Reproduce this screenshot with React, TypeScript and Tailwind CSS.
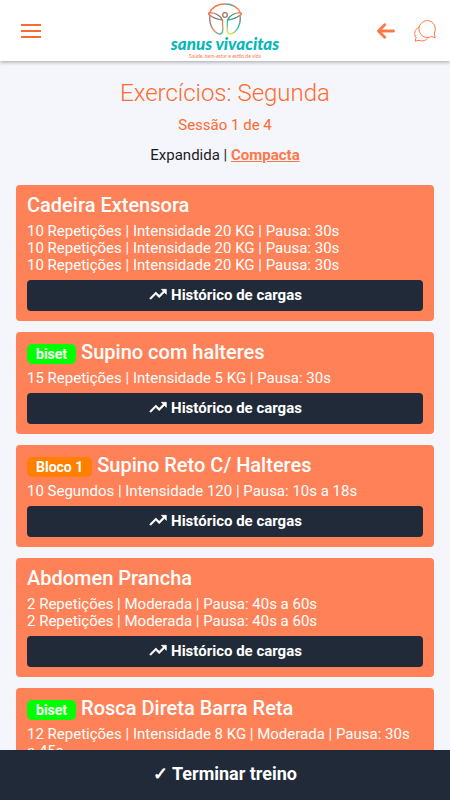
import { FaArrowLeft } from "react-icons/fa6";

type Exercise = {
  name: string;
  tag?: { label: string; className: string };
  sets: string[];
};

const BISET = { label: "biset", className: "bg-[#00ff00]" };

const exercises: Exercise[] = [
  {
    name: "Cadeira Extensora",
    sets: [
      "10 Repetições | Intensidade 20 KG | Pausa: 30s",
      "10 Repetições | Intensidade 20 KG | Pausa: 30s",
      "10 Repetições | Intensidade 20 KG | Pausa: 30s",
    ],
  },
  {
    name: "Supino com halteres",
    tag: BISET,
    sets: ["15 Repetições | Intensidade 5 KG | Pausa: 30s"],
  },
  {
    name: "Supino Reto C/ Halteres",
    tag: { label: "Bloco 1", className: "bg-[#ff8000]" },
    sets: ["10 Segundos | Intensidade 120 | Pausa: 10s a 18s"],
  },
  {
    name: "Abdomen Prancha",
    sets: [
      "2 Repetições | Moderada | Pausa: 40s a 60s",
      "2 Repetições | Moderada | Pausa: 40s a 60s",
    ],
  },
  {
    name: "Rosca Direta Barra Reta",
    tag: BISET,
    sets: ["12 Repetições | Intensidade 8 KG | Moderada | Pausa: 30s a\u00a045s"],
  },
];

function Logo() {
  return (
    <a href="#" className="flex flex-col items-center font-[Lato,sans-serif]">
      <svg viewBox="0 0 36 32" className="h-8 w-9" fill="none" strokeWidth="1.3" strokeLinecap="round">
        <defs>
          <linearGradient id="ring" x1="0" y1="0" x2="1" y2="0">
            <stop offset="0" stopColor="#ff6a3d" />
            <stop offset="0.4" stopColor="#ff7a45" />
            <stop offset="0.65" stopColor="#4aa89b" />
            <stop offset="0.85" stopColor="#f58a4b" />
            <stop offset="1" stopColor="#ff7a45" />
          </linearGradient>
          <linearGradient id="wingLeft" gradientUnits="userSpaceOnUse" x1="2" y1="10" x2="16" y2="31">
            <stop offset="0" stopColor="#ff6a3d" />
            <stop offset="0.35" stopColor="#6f7f78" />
            <stop offset="0.7" stopColor="#ff8a50" />
            <stop offset="1" stopColor="#12b5b0" />
          </linearGradient>
          <linearGradient id="wingRight" gradientUnits="userSpaceOnUse" x1="34" y1="10" x2="22" y2="31">
            <stop offset="0" stopColor="#ff7a45" />
            <stop offset="0.3" stopColor="#3f8f85" />
            <stop offset="0.6" stopColor="#2cc6a4" />
            <stop offset="1" stopColor="#e8e337" />
          </linearGradient>
        </defs>
        <path d="M2.500 10C5 4.500 11 1 18 1s13 3.500 15.500 9" stroke="url(#ring)" />
        <path
          d="M3 12.200C1 12 1 9.600 3 9.600c5 .2 10 2.400 12.500 7.400C11 16.500 6.500 15 3 12.200C1.500 21 6 29 12 31c2.500.5 3.800-1.500 3.800-4.500l-.3-9.500"
          stroke="url(#wingLeft)"
        />
        <path
          d="M33 12.200c2-.2 2-2.600 0-2.600-5 .2-10 2.400-12.500 7.400 4.500-.5 9-2 12.500-4.800C34.500 21 30 29 24 31c-2.500.5-3.800-1.500-3.800-4.500l.3-9.500"
          stroke="url(#wingRight)"
        />
        <circle cx="18" cy="12" r="2.300" stroke="#a87360" />
      </svg>
      <span className="text-[17px] leading-[18px] font-black italic text-[#05b8b8]">sanus vivacitas</span>
      <span className="text-[5px] leading-[6px] text-[#ff7a52]">Saúde, bem-estar e estilo de vida</span>
    </a>
  );
}

function ChatIcon() {
  return (
    <svg viewBox="0 0 24 24" className="size-6" fill="none" stroke="#ff7747" strokeWidth="1" strokeLinejoin="round">
      <path d="M14.500 1.500a8.500 8.500 0 1 0 4 16l3.700 1.200-.9-4.700a8.500 8.500 0 0 0-6.800-12.500Z" />
      <path d="M6 8C1.500 10.500.5 15 3 18.500l-.8 3.700 3.800-.9c3.500 1.400 7.200.4 9.500-3.300" />
    </svg>
  );
}

function TrendIcon() {
  return (
    <svg viewBox="0 0 24 24" className="size-5" fill="currentColor" stroke="currentColor" strokeWidth="0.8">
      <path d="m16 4 2.300 2.300-4.900 4.900-4-4L2 14.600 3.400 16l6-6 4 4 6.300-6.300L22 10V4z" />
    </svg>
  );
}

function Header() {
  return (
    <header className="relative z-10 flex items-start justify-between bg-white px-[21px] shadow-[0_1px_4px_rgba(0,0,0,0.35)]">
      <div className="flex h-[61px] flex-1 items-center">
        <button type="button" aria-label="Menu" className="flex w-5 flex-col gap-1">
          <span className="h-0.5 w-full bg-[#ff6a2f]" />
          <span className="h-0.5 w-full bg-[#ff6a2f]" />
          <span className="h-0.5 w-full bg-[#ff6a2f]" />
        </button>
      </div>
      <div className="pt-[3px]">
        <Logo />
      </div>
      <div className="flex h-[61px] flex-1 items-center justify-end gap-[17px]">
        <button type="button" aria-label="Voltar">
          <FaArrowLeft className="size-5 text-[#ff7747]" stroke="currentColor" strokeWidth="10" />
        </button>
        <button type="button" aria-label="Mensagens" className="-mr-2">
          <ChatIcon />
        </button>
      </div>
    </header>
  );
}

function ExerciseCard({ exercise }: { exercise: Exercise }) {
  return (
    <article className="rounded bg-[#ff8157] px-[11px] pt-2 pb-2.5 text-white">
      <h2 className="mb-1.5 flex items-center text-[20px] leading-6 font-medium">
        {exercise.tag && (
          <span
            className={`mt-1 mr-[5px] rounded-[5px] px-[9px] text-[14px] leading-5 font-bold ${exercise.tag.className}`}
          >
            {exercise.tag.label}
          </span>
        )}
        {exercise.name}
      </h2>
      {exercise.sets.map((set, i) => (
        <p key={i} className="text-[15px] leading-[17px]">
          {set}
        </p>
      ))}
      <button
        type="button"
        className="mt-1.5 flex h-[31px] w-full items-center justify-center gap-[3px] rounded bg-[#212a38] text-[15px] font-bold"
      >
        <TrendIcon />
        Histórico de cargas
      </button>
    </article>
  );
}

export default function App() {
  return (
    <div className="flex h-screen flex-col bg-[#f4f6fb] font-[Roboto,sans-serif] text-[#1b1b1f]">
      <Header />

      <main className="min-h-0 flex-1 overflow-y-auto px-4 pb-4 [scrollbar-width:none]">
        <div className="flex flex-col items-center pt-4 text-[15px]">
          <h1 className="text-[24px] leading-8 font-light text-[#ff6a2f]">Exercícios: Segunda</h1>
          <p className="mt-1.5 leading-5 text-[#ff6a2f]">Sessão 1 de 4</p>
          <p className="mt-2.5 leading-5">
            Expandida |{" "}
            <a href="#" className="font-bold text-[#ff7747] underline">
              Compacta
            </a>
          </p>
        </div>

        {/* Exercise list */}
        <div className="mt-5 flex flex-col gap-[11px]">
          {exercises.map((exercise) => (
            <ExerciseCard key={exercise.name} exercise={exercise} />
          ))}
        </div>
      </main>

      <button type="button" className="h-[50px] shrink-0 bg-[#212a38] pb-1 text-[18px] font-bold text-white">
        ✓ Terminar treino
      </button>
    </div>
  );
}
